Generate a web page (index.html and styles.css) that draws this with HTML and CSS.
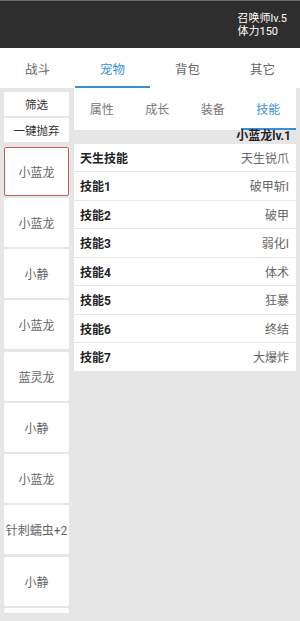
FILE: index.html
```html
<!DOCTYPE html>
<html lang="zh">
<head>
    <meta charset="UTF-8">
    <meta name="viewport" content="width=device-width, initial-scale=1.0">
    <title>宠物</title>
    <link rel="stylesheet" href="styles.css">
</head>
<body>
    <!-- top status bar -->
    <div class="topbar">
        <div class="player">
            <div>召唤师lv.5</div>
            <div>体力150</div>
        </div>
    </div>

    <div class="tabs">
        <div class="tab">战斗</div>
        <div class="tab active">宠物</div>
        <div class="tab">背包</div>
        <div class="tab">其它</div>
    </div>

    <div class="main">
        <div class="side">
            <div class="side-btn">筛选</div>
            <div class="side-btn">一键抛弃</div>
            <div class="pet-list">
                <div class="pet selected">小蓝龙</div>
                <div class="pet">小蓝龙</div>
                <div class="pet">小静</div>
                <div class="pet">小蓝龙</div>
                <div class="pet">蓝灵龙</div>
                <div class="pet">小静</div>
                <div class="pet">小蓝龙</div>
                <div class="pet">针刺蠕虫+2</div>
                <div class="pet">小静</div>
                <div class="pet"></div>
            </div>
        </div>

        <div class="detail">
            <div class="subtabs">
                <div class="subtab">属性</div>
                <div class="subtab">成长</div>
                <div class="subtab">装备</div>
                <div class="subtab active">技能</div>
            </div>
            <div class="pet-title">小蓝龙lv.1</div>
            <div class="skill"><span class="skill-name">天生技能</span><span class="skill-val">天生锐爪</span></div>
            <div class="skill"><span class="skill-name">技能1</span><span class="skill-val">破甲斩I</span></div>
            <div class="skill"><span class="skill-name">技能2</span><span class="skill-val">破甲</span></div>
            <div class="skill"><span class="skill-name">技能3</span><span class="skill-val">弱化I</span></div>
            <div class="skill"><span class="skill-name">技能4</span><span class="skill-val">体术</span></div>
            <div class="skill"><span class="skill-name">技能5</span><span class="skill-val">狂暴</span></div>
            <div class="skill"><span class="skill-name">技能6</span><span class="skill-val">终结</span></div>
            <div class="skill"><span class="skill-name">技能7</span><span class="skill-val">大爆炸</span></div>
        </div>
    </div>
</body>
</html>
```

FILE: styles.css
```css
body, html {
    margin: 0;
    padding: 0;
    height: 100%;
    overflow: hidden;
    font-family: Roboto, "Noto Sans CJK SC", sans-serif;
    font-size: 12px;
    background-color: #e6e6e6;
}

.topbar {
    height: 47px;
    border-top: 1px solid #6a6a6a;
    background-color: #2e2e2e;
    display: flex;
    justify-content: flex-end;
    align-items: center;
    padding-right: 13px;
}

.player {
    color: #fff;
    font-size: 11px;
    line-height: 12.5px;
    white-space: nowrap;
    margin-top: 2px;
}

.tabs {
    display: flex;
    height: 40px;
    background-color: #fff;
}

.tab {
    flex: 1;
    display: flex;
    align-items: center;
    justify-content: center;
    color: #666;
    font-size: 12.5px;
    border-bottom: 2px solid transparent;
    padding-top: 2px;
}

.tab.active {
    color: #3a8fd8;
    border-bottom-color: #3a8fd8;
}

.main {
    display: flex;
    gap: 5px;
    padding: 0 4px;
    height: 533px;
}

/* left column */
.side {
    width: 65px;
    display: flex;
    flex-direction: column;
    padding: 4px 0 8px;
    box-sizing: border-box;
}

.side-btn {
    height: 24px;
    background-color: #fff;
    color: #333;
    font-size: 11.5px;
    display: flex;
    align-items: center;
    justify-content: center;
    margin-bottom: 1.5px;
}

.pet-list {
    flex: 1;
    overflow: hidden;
    margin-top: 3.5px;
    display: flex;
    flex-direction: column;
    gap: 2.25px;
}

.pet {
    flex: none;
    height: 49px;
    background-color: #fff;
    color: #666;
    display: flex;
    align-items: center;
    justify-content: center;
    border: 1px solid transparent;
    border-radius: 2px;
    box-sizing: border-box;
    white-space: nowrap;
}

.pet.selected {
    border-color: #c85c5c;
}

/* right panel */
.detail {
    flex: 1;
    display: flex;
    flex-direction: column;
}

.subtabs {
    display: flex;
    height: 42px;
    background-color: #fff;
}

.subtab {
    flex: 1;
    display: flex;
    align-items: center;
    justify-content: center;
    color: #777;
    border-bottom: 2px solid transparent;
}

.subtab.active {
    color: #3a8fd8;
    border-bottom-color: #3a8fd8;
}

.pet-title {
    text-align: right;
    font-weight: bold;
    color: #222;
    line-height: 13px;
    height: 13.5px;
    padding-right: 5px;
}

.skill {
    height: 27.5px;
    margin-bottom: 1px;
    background-color: #fff;
    display: flex;
    justify-content: space-between;
    align-items: center;
    padding: 0 7px 0 6px;
}

.skill-name {
    font-weight: bold;
    color: #222;
}

.skill-val {
    color: #666;
}
```
